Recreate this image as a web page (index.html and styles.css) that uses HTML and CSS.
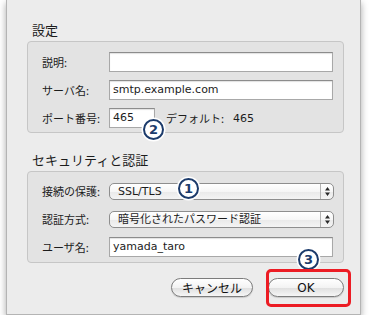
FILE: index.html
```html
<!DOCTYPE html>
<html lang="ja">
    <head>
        <meta charset="UTF-8">
        <title>アカウント設定</title>
        <link rel="stylesheet" href="styles.css">
    </head>
    <body>
        <div class="window">
            <h2 class="section-title">設定</h2>
            <div class="group">
                <div class="row">
                    <span class="label">説明:</span>
                    <div class="field"></div>
                </div>
                <div class="row">
                    <span class="label">サーバ名:</span>
                    <div class="field">smtp.example.com</div>
                </div>
                <div class="row">
                    <span class="label">ポート番号:</span>
                    <div class="field port">465</div>
                    <span class="default-label">デフォルト:</span>
                    <span class="default-value">465</span>
                </div>
            </div>

            <h2 class="section-title second">セキュリティと認証</h2>
            <div class="group security">
                <div class="row">
                    <span class="label">接続の保護:</span>
                    <div class="popup">
                        <span class="popup-text">SSL/TLS</span>
                        <span class="popup-arrows">
                            <svg width="7" height="11" viewBox="0 0 7 11"><path d="M3.5 1 L6 4.5 L1 4.5 Z M3.5 10 L6 6.5 L1 6.5 Z" fill="#2a2a2a"/></svg>
                        </span>
                    </div>
                </div>
                <div class="row">
                    <span class="label">認証方式:</span>
                    <div class="popup">
                        <span class="popup-text">暗号化されたパスワード認証</span>
                        <span class="popup-arrows">
                            <svg width="7" height="11" viewBox="0 0 7 11"><path d="M3.5 1 L6 4.5 L1 4.5 Z M3.5 10 L6 6.5 L1 6.5 Z" fill="#2a2a2a"/></svg>
                        </span>
                    </div>
                </div>
                <div class="row">
                    <span class="label">ユーザ名:</span>
                    <div class="field">yamada_taro</div>
                </div>
            </div>

            <div class="actions">
                <button class="btn btn-cancel">キャンセル</button>
                <button class="btn btn-ok">OK</button>
            </div>

            <!-- annotation marks -->
            <span class="badge badge-1">1</span>
            <span class="badge badge-2">2</span>
            <span class="badge badge-3">3</span>
            <span class="highlight"></span>
        </div>
    </body>
</html>
```

FILE: styles.css
```css
* {
    margin: 0;
    padding: 0;
    box-sizing: border-box;
}

body {
    background: #fff;
    color: #1c1c1c;
    font-family: "DejaVu Sans", "Noto Sans CJK JP", sans-serif;
    font-size: 11px;
}

.window {
    position: relative;
    width: 355px;
    height: 315px;
    margin-left: 6px;
    background: #ececec;
    border: 1px solid #b4b4b4;
    border-top: none;
    box-shadow: 0 3px 7px rgba(0, 0, 0, 0.35);
    padding: 22px 16px 0 20px;
}

.section-title {
    font-family: "Noto Sans CJK JP", sans-serif;
    font-size: 13px;
    font-weight: normal;
    line-height: 16px;
    padding-left: 5px;
    margin-bottom: 3px;
}

.section-title.second {
    margin-top: 19px;
}

.group {
    display: flex;
    flex-direction: column;
    gap: 8px;
    background: #e3e3e3;
    border: 1px solid #c6c6c6;
    border-radius: 4px;
    padding: 10px 10px 4px 14px;
}

.group.security {
    padding-top: 9px;
    padding-bottom: 5px;
}

.row {
    display: flex;
    align-items: center;
    height: 20px;
}

.label {
    width: 67px;
    font-family: "Noto Sans CJK JP", sans-serif;
}

.field {
    flex: 1;
    height: 20px;
    background: #fff;
    border: 1px solid #a8a8a8;
    border-top-color: #8c8c8c;
    box-shadow: inset 0 1px 1px rgba(0, 0, 0, 0.12);
    padding-left: 3px;
    line-height: 18px;
}

.field.port {
    flex: none;
    width: 46px;
}

.default-label {
    margin-left: 11px;
    font-family: "Noto Sans CJK JP", sans-serif;
}

.default-value {
    margin-left: 9px;
}

.popup {
    flex: 1;
    display: flex;
    height: 17px;
    margin-right: -1px;
    border: 1px solid #8e8e8e;
    border-radius: 5px;
    background: linear-gradient(#ffffff, #f6f6f6 50%, #e9e9e9 51%, #f4f4f4);
    overflow: hidden;
}

.popup-text {
    flex: 1;
    padding-left: 8px;
    line-height: 15px;
}

.popup-arrows {
    width: 13px;
    display: flex;
    align-items: center;
    justify-content: center;
    border-left: 1px solid #b4b4b4;
}

.actions {
    display: flex;
    justify-content: flex-end;
    gap: 15px;
    margin-top: 15px;
}

.btn {
    height: 19px;
    border: 1px solid #7c7c7c;
    border-radius: 10px;
    background: linear-gradient(#ffffff, #f3f3f3 50%, #dedede 51%, #f6f6f6);
    font-family: "DejaVu Sans", "Noto Sans CJK JP", sans-serif;
    font-size: 12px;
    color: #111;
    box-shadow: 0 1px 1px rgba(0, 0, 0, 0.15);
}

.btn-cancel {
    width: 82px;
}

.btn-ok {
    width: 76px;
}

.badge {
    position: absolute;
    width: 21px;
    height: 21px;
    border: 2px solid #1c3b6b;
    border-radius: 50%;
    background: #fff;
    color: #1c3b6b;
    font: bold 13px/17px "DejaVu Sans", sans-serif;
    text-align: center;
    box-shadow: 0 0 0 1.5px #fff;
}

.badge-1 {
    left: 171px;
    top: 178px;
}

.badge-2 {
    left: 136px;
    top: 119px;
}

.badge-3 {
    left: 291px;
    top: 249px;
}

.highlight {
    position: absolute;
    left: 259px;
    top: 269px;
    width: 85px;
    height: 38px;
    border: 3px solid #ec1c24;
    border-radius: 5px;
}
```
